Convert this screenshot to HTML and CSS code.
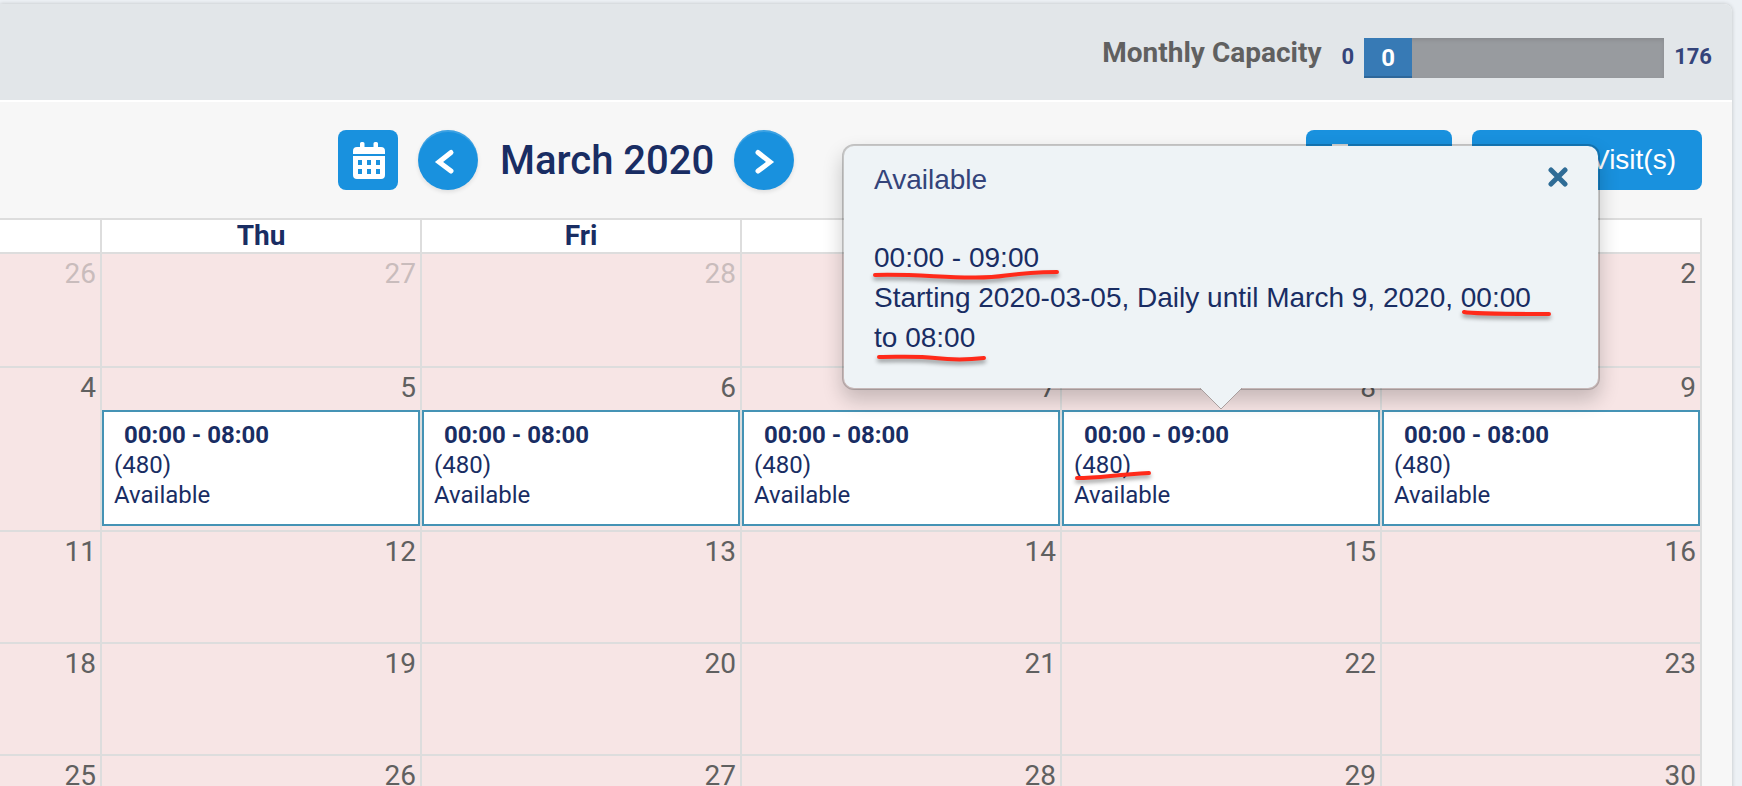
FILE: index.html
```html
<!DOCTYPE html>
<html lang="en">
<head>
  <meta charset="UTF-8">
  <meta name="viewport" content="width=device-width, initial-scale=1.0">
  <title>March 2020 - Monthly Capacity</title>
  <link rel="stylesheet" href="styles.css">
</head>
<body>

  <main class="panel">
    <header class="panel-header">
      <span class="capacity-label">Monthly Capacity</span>
      <span class="capacity-value">0</span>
      <div class="progress">
        <div class="progress-bar">0</div>
      </div>
      <span class="capacity-value">176</span>
    </header>

    <div class="toolbar">
      <div class="month-nav">
        <button class="btn btn-icon" type="button" aria-label="Pick a date">
          <svg width="60" height="60" viewBox="0 0 60 60">
            <path fill="#fff" d="M15 24v-3a4 4 0 0 1 4-4h3v-3.500a1.500 1.500 0 0 1 1.500-1.500h1.500a1.500 1.500 0 0 1 1.500 1.500V17h9v-3.500a1.500 1.500 0 0 1 1.500-1.500h1.500a1.500 1.500 0 0 1 1.500 1.500V17h3a4 4 0 0 1 4 4v3z"/>
            <path fill="#fff" fill-rule="evenodd" d="M15 26h32v19a4 4 0 0 1-4 4H19a4 4 0 0 1-4-4zM20 30v5h4v-5zM29 30v5h4v-5zM38 30v5h4v-5zM20 39v5h4v-5zM29 39v5h4v-5zM38 39v5h4v-5z"/>
          </svg>
        </button>
        <button class="btn btn-icon btn-round" type="button" aria-label="Previous month">
          <svg width="60" height="60" viewBox="0 0 60 60">
            <path class="chevron" d="M33 22.500L21 32L33 41"/>
          </svg>
        </button>
        <h1 class="month-title">March 2020</h1>
        <button class="btn btn-icon btn-round" type="button" aria-label="Next month">
          <svg width="60" height="60" viewBox="0 0 60 60">
            <path class="chevron" d="M24 22.500L36 32L24 41"/>
          </svg>
        </button>
      </div>
      <div class="actions">
        <button class="btn btn-print" type="button">
          <svg width="28" height="32" viewBox="0 0 28 32">
            <path fill="#fff" d="M6 0h16v10H6zM2 12h24v12h-4v-5H6v5H2zM8 21h12v9H8z"/>
          </svg>
          Print
        </button>
        <button class="btn btn-add" type="button">Add Visit(s)</button>
      </div>
    </div>

    <table class="calendar">
      <colgroup>
        <col class="col-cut">
        <col span="5">
      </colgroup>
      <thead>
        <tr>
          <th aria-label="Wed"></th>
          <th>Thu</th>
          <th>Fri</th>
          <th>Sat</th>
          <th>Sun</th>
          <th>Mon</th>
        </tr>
      </thead>
      <tbody>
        <tr>
          <td><div class="day other">26</div></td>
          <td><div class="day other">27</div></td>
          <td><div class="day other">28</div></td>
          <td><div class="day other">29</div></td>
          <td><div class="day">1</div></td>
          <td><div class="day">2</div></td>
        </tr>
        <tr>
          <td><div class="day">4</div></td>
          <td>
            <div class="day">5</div>
            <div class="event"><strong>00:00 - 08:00</strong>(480)<br>Available</div>
          </td>
          <td>
            <div class="day">6</div>
            <div class="event"><strong>00:00 - 08:00</strong>(480)<br>Available</div>
          </td>
          <td>
            <div class="day">7</div>
            <div class="event"><strong>00:00 - 08:00</strong>(480)<br>Available</div>
          </td>
          <td>
            <div class="day">8</div>
            <div class="event">
              <strong>00:00 - 09:00</strong>
              <span class="marked">(480)
                <svg class="mark" width="84" height="20" viewBox="0 0 84 20">
                  <path d="M5 13C28 13 40 10 77 8"/>
                </svg>
              </span><br>Available

              <div class="popover" role="dialog" aria-labelledby="popover-title">
                <div class="popover-header">
                  <h2 id="popover-title">Available</h2>
                  <button class="close" type="button" aria-label="Close">
                    <svg width="20" height="20" viewBox="0 0 20 20">
                      <path d="M3 3L17 17M17 3L3 17"/>
                    </svg>
                  </button>
                </div>
                <p>
                  <span class="marked">00:00 - 09:00
                    <svg class="mark" width="200" height="20" viewBox="0 0 200 20">
                      <path d="M3 11C40 10 65 13 100 13.500C140 14 125 9 185 8"/>
                    </svg>
                  </span><br>
                  Starting 2020-03-05, Daily until March 9, 2020,
                  <span class="marked">00:00
                    <svg class="mark" width="100" height="20" viewBox="0 0 100 20">
                      <path d="M5 8C14 10 42 10 90 10"/>
                    </svg>
                  </span>
                  <span class="marked">to 08:00
                    <svg class="mark" width="130" height="20" viewBox="0 0 130 20">
                      <path d="M7 13C30 13 45 12 63 14C80 16 95 16 112 14"/>
                    </svg>
                  </span>
                </p>
                <svg class="arrow" width="44" height="24" viewBox="0 0 44 24">
                  <path d="M1 0L22 21L43 0"/>
                </svg>
              </div>
            </div>
          </td>
          <td>
            <div class="day">9</div>
            <div class="event"><strong>00:00 - 08:00</strong>(480)<br>Available</div>
          </td>
        </tr>
        <tr>
          <td><div class="day">11</div></td>
          <td><div class="day">12</div></td>
          <td><div class="day">13</div></td>
          <td><div class="day">14</div></td>
          <td><div class="day">15</div></td>
          <td><div class="day">16</div></td>
        </tr>
        <tr>
          <td><div class="day">18</div></td>
          <td><div class="day">19</div></td>
          <td><div class="day">20</div></td>
          <td><div class="day">21</div></td>
          <td><div class="day">22</div></td>
          <td><div class="day">23</div></td>
        </tr>
        <tr>
          <td><div class="day">25</div></td>
          <td><div class="day">26</div></td>
          <td><div class="day">27</div></td>
          <td><div class="day">28</div></td>
          <td><div class="day">29</div></td>
          <td><div class="day">30</div></td>
        </tr>
      </tbody>
    </table>
  </main>

</body>
</html>
```
FILE: styles.css
```css
* {
  box-sizing: border-box;
}

html {
  overflow: hidden;
}

body {
  margin: 0;
  padding: 4px 10px 0 0;
  height: 100vh;
  overflow: hidden;
  background: #edf1f5;
  color: #192d63;
  font-family: Roboto, "Liberation Sans", sans-serif;
}

.panel {
  background: #f7f7f7;
  border-radius: 0 8px 0 0;
  box-shadow: 0 0 4px rgba(0, 0, 0, 0.2);
}

/* monthly capacity */
.panel-header {
  display: flex;
  align-items: center;
  justify-content: flex-end;
  gap: 10px;
  height: 98px;
  padding: 12px 20px 0 0;
  background: #e2e6e9;
  border-bottom: 2px solid #fff;
  border-radius: 0 8px 0 0;
}

.capacity-label {
  margin-right: 10px;
  padding-bottom: 12px;
  color: #606060;
  font-size: 28px;
  font-weight: bold;
}

.capacity-value {
  padding-bottom: 4px;
  color: #34447a;
  font-size: 22px;
  font-weight: bold;
}

.progress {
  width: 300px;
  height: 40px;
  background: #989b9f;
  box-shadow: inset 0 2px 4px rgba(0, 0, 0, 0.1);
}

.progress-bar {
  width: 16%;
  height: 40px;
  background: #377ab5;
  box-shadow: inset 0 -2px 0 rgba(0, 0, 0, 0.15);
  color: #fff;
  font-size: 24px;
  font-weight: bold;
  line-height: 40px;
  text-align: center;
}

/* toolbar */
.toolbar {
  display: flex;
  justify-content: space-between;
  padding: 28px 30px 28px 338px;
}

.month-nav,
.actions {
  display: flex;
  align-items: center;
  gap: 20px;
}

.month-title {
  margin: 0;
  padding: 2px 0 0 2px;
  font-size: 40px;
  font-weight: 500;
  line-height: 58px;
}

.btn {
  display: flex;
  align-items: center;
  gap: 12px;
  height: 60px;
  border: none;
  border-radius: 8px;
  background: #1991de;
  color: #fff;
  font-family: "Liberation Sans", sans-serif;
  font-size: 28px;
  cursor: pointer;
}

.btn-icon {
  width: 60px;
  padding: 0;
}

.btn-round {
  border-radius: 50%;
  box-shadow: 0 2px 4px rgba(0, 0, 0, 0.1), inset 0 2px 0 rgba(255, 255, 255, 0.15);
}

.chevron {
  fill: none;
  stroke: #fff;
  stroke-width: 5;
  stroke-linecap: round;
}

.btn-print {
  width: 146px;
  padding: 0 20px;
}

.btn-add {
  width: 230px;
  padding: 0 26px;
  justify-content: flex-end;
}

/* calendar */
.calendar {
  width: calc(100% - 30px);
  table-layout: fixed;
  border-collapse: separate;
  border-spacing: 0;
  border-top: 2px solid #ddd;
}

.col-cut {
  width: 102px;
}

.calendar th,
.calendar td {
  padding: 0;
  border-right: 2px solid #ddd;
  border-bottom: 2px solid #ddd;
  vertical-align: top;
}

.calendar th {
  height: 34px;
  background: #fff;
  font-size: 28px;
  line-height: 32px;
}

.calendar td {
  height: 112px;
  background: #f7e5e5;
}

.calendar tbody tr:first-child td {
  height: 114px;
}

.day {
  height: 42px;
  padding: 4px 4px 0 0;
  color: #606060;
  font-size: 28px;
  line-height: 32px;
  text-align: right;
}

.day.other {
  color: #c9bcbc;
}

.event {
  position: relative;
  height: 116px;
  margin-bottom: 4px;
  padding: 8px 10px;
  border: 2px solid #4593b5;
  background: #fff;
  font-size: 24px;
  line-height: 30px;
}

.event strong {
  display: block;
  padding-left: 10px;
}

/* popover */
.popover {
  position: absolute;
  z-index: 10;
  bottom: calc(100% + 22px);
  left: 50%;
  width: 758px;
  transform: translateX(-50%);
  padding: 14px 30px 30px;
  border: 2px solid rgba(0, 0, 0, 0.2);
  border-radius: 12px;
  background: #eef3f6;
  background-clip: padding-box;
  box-shadow: 0 10px 20px rgba(0, 0, 0, 0.2);
  font-family: "Liberation Sans", sans-serif;
  font-size: 28px;
  line-height: 40px;
}

.popover-header {
  display: flex;
  justify-content: space-between;
  margin-bottom: 38px;
}

.popover h2 {
  margin: 0;
  color: #34447a;
  font-size: 28px;
  font-weight: 500;
}

.popover p {
  margin: 0;
}

.close {
  display: flex;
  align-items: center;
  height: 34px;
  padding: 0;
  border: none;
  background: none;
  cursor: pointer;
}

.close path {
  fill: none;
  stroke: #2f6c96;
  stroke-width: 5;
  stroke-linecap: round;
}

.arrow {
  position: absolute;
  top: 100%;
  left: calc(50% - 22px);
}

.arrow path {
  fill: #eef3f6;
  stroke: #a99f9f;
}

/* red pen marks */
.marked {
  position: relative;
  white-space: nowrap;
}

.mark {
  position: absolute;
  top: 22px;
  left: -2px;
  filter: drop-shadow(0 3px 2px rgba(0, 0, 0, 0.4));
}

.event > .marked .mark {
  top: 14px;
}

.mark path {
  fill: none;
  stroke: #ff2a1a;
  stroke-width: 4;
  stroke-linecap: round;
}
```
